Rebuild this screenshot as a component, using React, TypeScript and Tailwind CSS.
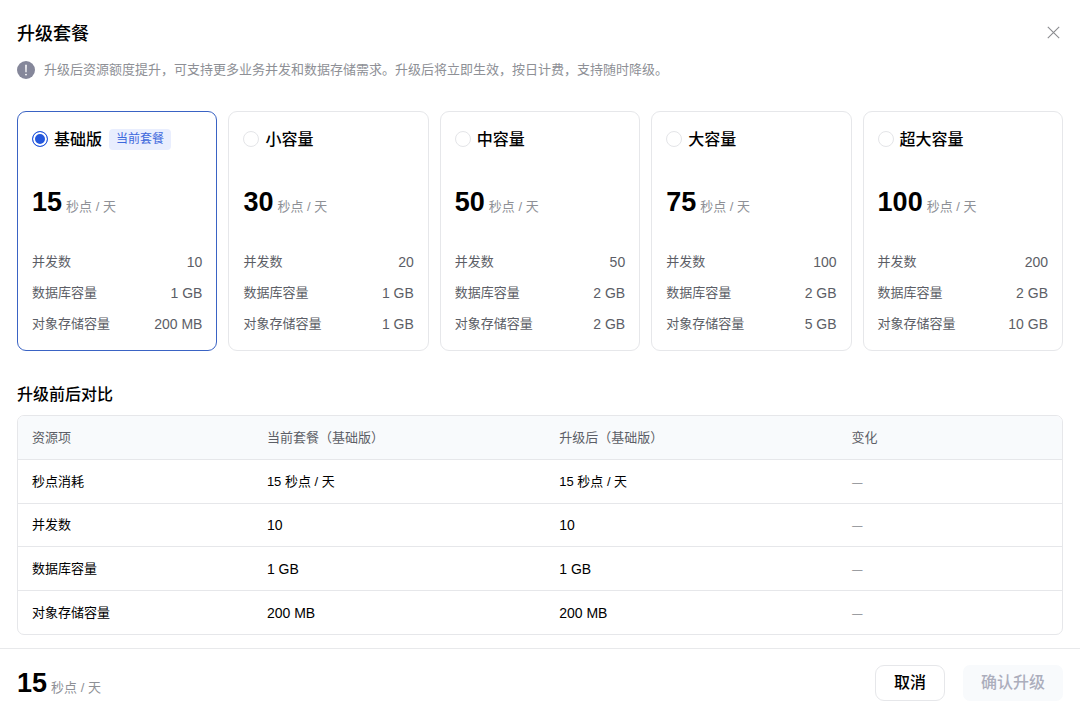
import React, { useState } from 'react';

interface Plan {
  id: string;
  name: string;
  price: number;
  concurrency: number;
  database: string;
  storage: string;
}

const plans: Plan[] = [
  { id: 'basic', name: '基础版', price: 15, concurrency: 10, database: '1 GB', storage: '200 MB' },
  { id: 'small', name: '小容量', price: 30, concurrency: 20, database: '1 GB', storage: '1 GB' },
  { id: 'medium', name: '中容量', price: 50, concurrency: 50, database: '2 GB', storage: '2 GB' },
  { id: 'large', name: '大容量', price: 75, concurrency: 100, database: '2 GB', storage: '5 GB' },
  { id: 'xlarge', name: '超大容量', price: 100, concurrency: 200, database: '2 GB', storage: '10 GB' },
];

const current = plans[0];

const Price: React.FC<{ value: number }> = ({ value }) => (
  <div className="flex items-baseline gap-1">
    <span className="text-[27px] leading-8 font-bold">{value}</span>
    <span className="text-[13px] text-[#8e9096]">秒点 / 天</span>
  </div>
);

const Spec: React.FC<{ label: string; value: string | number }> = ({ label, value }) => (
  <div className="flex justify-between leading-5 text-[#5c5e66]">
    <dt className="text-[13px]">{label}</dt>
    <dd className="text-sm">{value}</dd>
  </div>
);

interface PlanCardProps {
  plan: Plan;
  selected: boolean;
  onSelect: () => void;
}

const PlanCard: React.FC<PlanCardProps> = ({ plan, selected, onSelect }) => (
  <label
    htmlFor={plan.id}
    className={`block cursor-pointer rounded-[9px] border px-[14px] pt-[14px] pb-4 ${selected ? 'border-[#3a63c4]' : 'border-[#e6e7ea]'}`}
  >
    <div className="flex h-[26px] items-center">
      <input
        id={plan.id}
        type="radio"
        name="plan"
        checked={selected}
        onChange={onSelect}
        className="size-4 shrink-0 appearance-none rounded-full border border-[#e4e5e8] bg-white checked:border-[#2457dc] checked:bg-[#2457dc] checked:inset-ring-2 checked:inset-ring-white"
      />
      <span className="ml-[6px] pt-0.5 text-base font-medium">{plan.name}</span>
      {plan.id === current.id && (
        <span className="ml-[7px] rounded-[4px] bg-[#e9eefe] px-[7px] text-xs leading-[21px] text-[#3d68dc]">当前套餐</span>
      )}
    </div>
    <div className="mt-[34px]">
      <Price value={plan.price} />
    </div>
    <dl className="mt-[34px] flex flex-col gap-[11px]">
      <Spec label="并发数" value={plan.concurrency} />
      <Spec label="数据库容量" value={plan.database} />
      <Spec label="对象存储容量" value={plan.storage} />
    </dl>
  </label>
);

export default function App() {
  const [selectedId, setSelectedId] = useState(current.id);
  const next = plans.find((p) => p.id === selectedId) ?? current;

  const rows = [
    { label: '秒点消耗', before: `${current.price} 秒点 / 天`, after: `${next.price} 秒点 / 天`, mixed: true },
    { label: '并发数', before: current.concurrency, after: next.concurrency },
    { label: '数据库容量', before: current.database, after: next.database },
    { label: '对象存储容量', before: current.storage, after: next.storage },
  ];

  return (
    <div
      lang="zh-CN"
      className="bg-white font-['Liberation_Sans','Noto_Sans_CJK_SC',sans-serif] text-black"
    >
      <main className="px-[17px] pt-[21px]">
        <header className="flex items-start justify-between">
          <h1 className="text-lg leading-[26px] font-medium">升级套餐</h1>
          <button type="button" aria-label="关闭" className="mt-[5px] mr-[3px] text-[#8b8c90]">
            <svg width="13" height="13" viewBox="0 0 13 13" fill="none" stroke="currentColor" strokeWidth="1.1">
              <path d="M.8.8l11.4 11.4M12.2.8L.8 12.2" />
            </svg>
          </button>
        </header>

        <div className="mt-[13px] flex items-center gap-[9px]">
          <svg width="18" height="18" viewBox="0 0 18 18" className="shrink-0">
            <circle cx="9" cy="9" r="9" fill="#85879a" />
            <path d="M8.2 3.8h1.6l-.2 7.4H8.4z" fill="#fff" />
            <circle cx="9" cy="13.6" r=".9" fill="#fff" />
          </svg>
          <p className="text-[13px] leading-5 text-[#8e9096]">
            升级后资源额度提升，可支持更多业务并发和数据存储需求。升级后将立即生效，按日计费，支持随时降级。
          </p>
        </div>

        <div role="radiogroup" aria-label="套餐" className="mt-[31px] grid grid-cols-5 gap-[11px]">
          {plans.map((plan) => (
            <PlanCard
              key={plan.id}
              plan={plan}
              selected={plan.id === selectedId}
              onSelect={() => setSelectedId(plan.id)}
            />
          ))}
        </div>

        <h2 className="mt-8 text-base leading-6 font-medium">升级前后对比</h2>
        <div className="mt-2 overflow-hidden rounded-[7px] border border-[#e6e7ea]">
          <table className="w-full table-fixed border-separate border-spacing-0 text-left text-[13px]">
            <thead>
              <tr className="h-11 bg-[#f8fafc] text-[#5c5e66]">
                <th className="w-[22.5%] border-b border-[#e6e7ea] px-[14px] font-normal">资源项</th>
                <th className="w-[28%] border-b border-[#e6e7ea] px-[14px] font-normal">当前套餐（{current.name}）</th>
                <th className="w-[28%] border-b border-[#e6e7ea] px-[14px] font-normal">升级后（{next.name}）</th>
                <th className="border-b border-[#e6e7ea] px-[14px] font-normal">变化</th>
              </tr>
            </thead>
            <tbody>
              {rows.map((row, i) => {
                const line = i < rows.length - 1 ? 'border-b border-[#e6e7ea]' : '';
                const size = row.mixed ? 'text-[13px]' : 'text-sm';
                return (
                  <tr key={row.label} className="h-11 even:h-[43px]">
                    <td className={`px-[14px] ${line}`}>{row.label}</td>
                    <td className={`px-[14px] ${size} ${line}`}>{row.before}</td>
                    <td className={`px-[14px] ${size} ${line}`}>{row.after}</td>
                    <td className={`px-[14px] font-['Noto_Sans_CJK_SC',sans-serif] text-[#85878c] ${line}`}>—</td>
                  </tr>
                );
              })}
            </tbody>
          </table>
        </div>
      </main>

      <footer className="mt-[13px] flex items-center justify-between border-t border-[#e8e9eb] px-[17px] pt-4 pb-px">
        <Price value={next.price} />
        <div className="flex items-center gap-[18px]">
          <button type="button" className="h-9 rounded-[9px] border border-[#e6e7ea] px-[18px] text-base font-medium">
            取消
          </button>
          <button
            type="button"
            disabled={next.id === current.id}
            className="h-9 rounded-[7px] bg-[#2457dc] px-[18px] text-base font-medium text-white disabled:bg-[#f8fafc] disabled:text-[#acaebc]"
          >
            确认升级
          </button>
        </div>
      </footer>
    </div>
  );
}
